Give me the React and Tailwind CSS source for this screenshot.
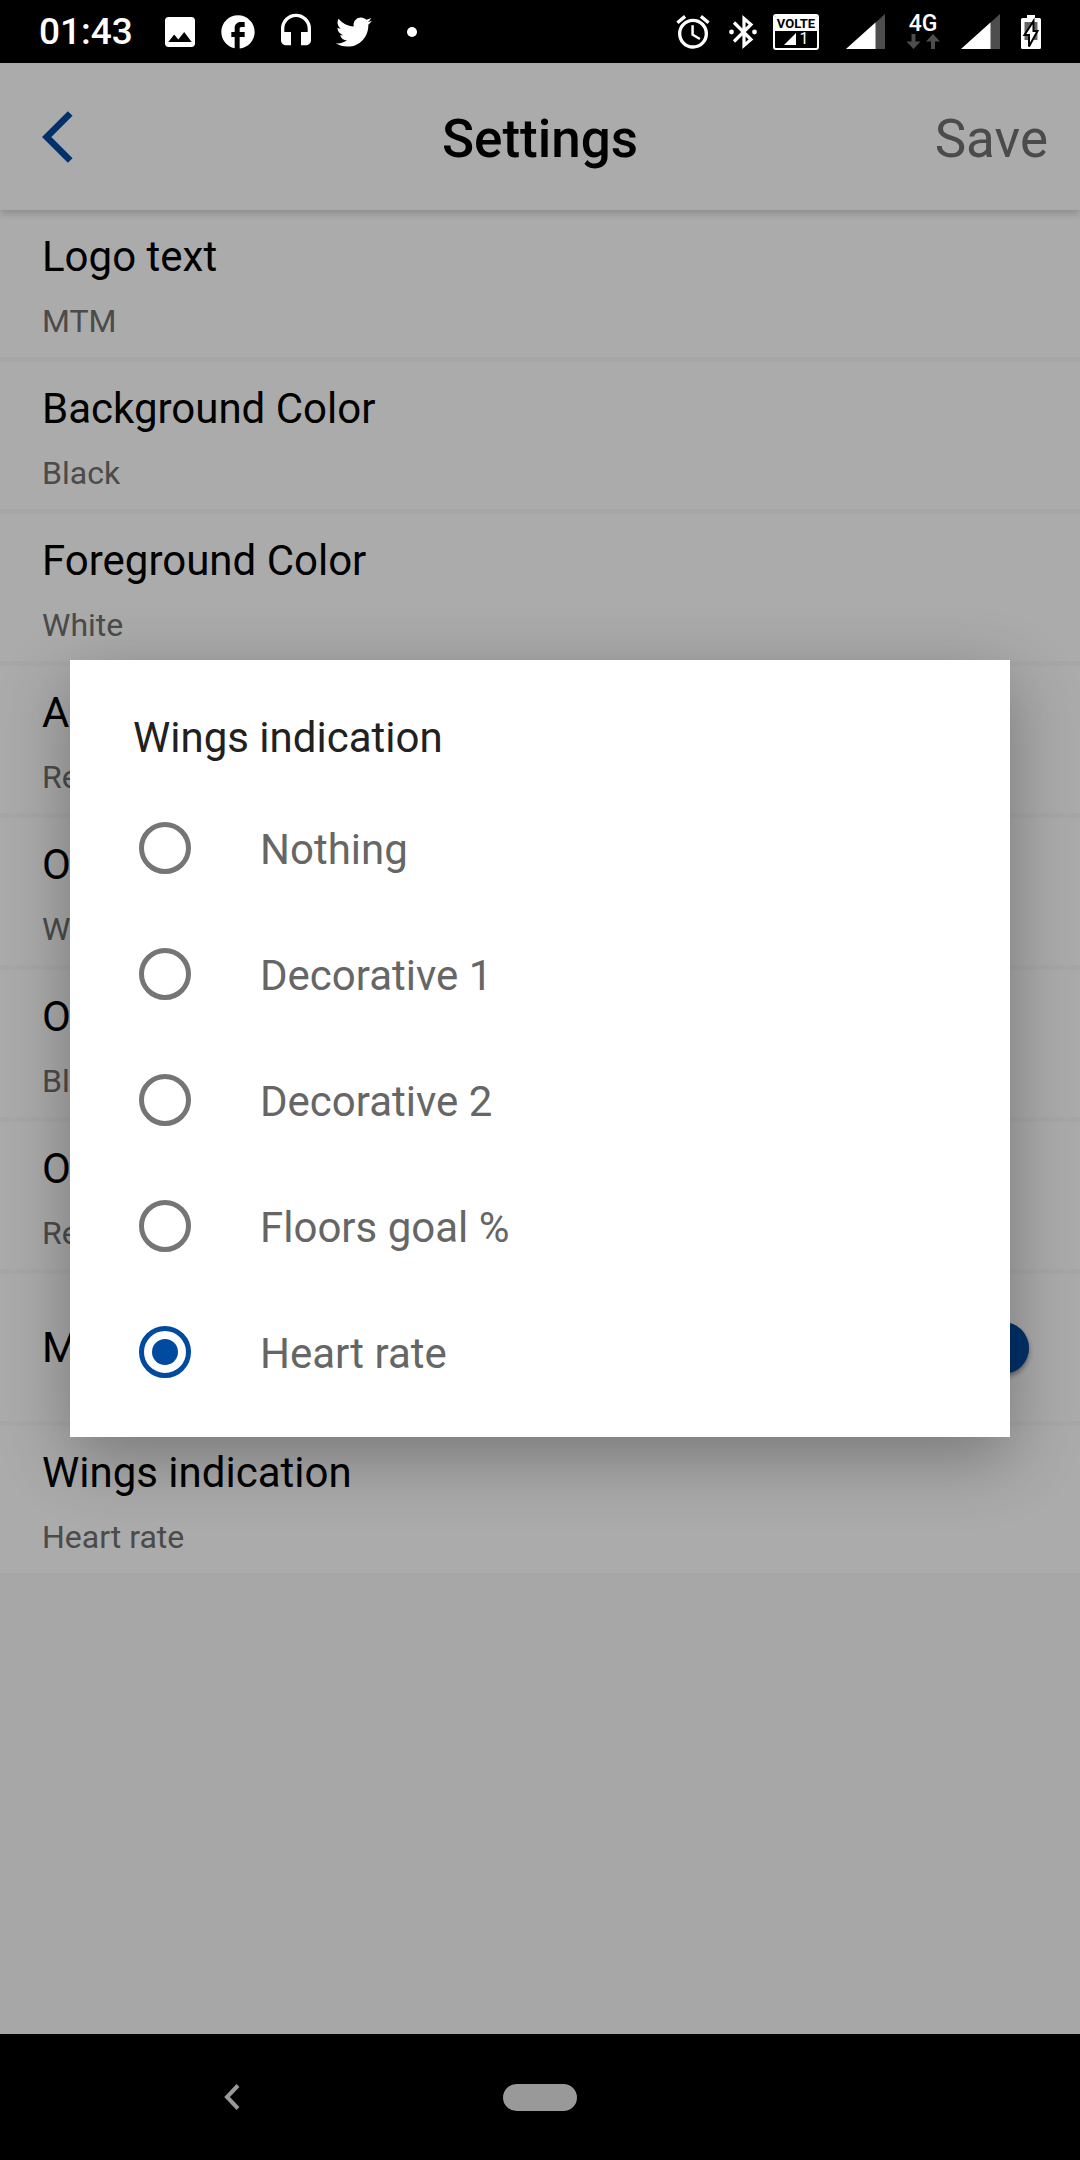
import { useState } from "react";
import { MdAlarm, MdFacebook, MdHeadset, MdImage } from "react-icons/md";
import { FaTwitter } from "react-icons/fa";

const SETTINGS = [
  { title: "Logo text", value: "MTM" },
  { title: "Background Color", value: "Black" },
  { title: "Foreground Color", value: "White" },
  { title: "Arc", value: "Red" },
  { title: "Ora", value: "White" },
  { title: "Orb", value: "Black" },
  { title: "Out", value: "Red" },
  { title: "Mo", toggle: true },
  { title: "Wings indication", value: "Heart rate" },
];

const OPTIONS = ["Nothing", "Decorative 1", "Decorative 2", "Floors goal %", "Heart rate"];

function BluetoothIcon() {
  return (
    <svg width="34" height="34" viewBox="0 0 34 34" fill="none" aria-hidden="true">
      <path d="M8 7.500 25 24.500 18 30.500V3.500L25 9.500 8 26.500" stroke="#fff" strokeWidth="3.200" />
      <circle cx="5.500" cy="17" r="2.400" fill="#fff" />
      <circle cx="28.500" cy="17" r="2.400" fill="#fff" />
    </svg>
  );
}

function VolteBadge() {
  return (
    <div className="mr-1.5 flex h-[36px] w-[46px] flex-col overflow-hidden rounded-[3px] border-2 border-white bg-black">
      <span className="flex h-[15px] items-center justify-center bg-white text-[13px] leading-[15px] font-bold text-black">
        VOLTE
      </span>
      <span className="flex flex-1 items-center justify-center gap-1 text-[16px] leading-[16px]">
        <svg width="12" height="12" viewBox="0 0 12 12" aria-hidden="true">
          <path d="M0 12 12 0V12Z" fill="#fff" />
        </svg>
        1
      </span>
    </div>
  );
}

function SignalIcon() {
  return (
    <svg width="39" height="35" viewBox="0 0 39 35" aria-hidden="true">
      <path d="M0 35 39 0V35Z" fill="#4d4d4d" />
      <path d="M0 35 29.500 8.500V35Z" fill="#fff" />
    </svg>
  );
}

function NetworkType() {
  return (
    <div className="flex w-[34px] flex-col items-center">
      <span className="text-[23px] leading-[20px] font-medium">4G</span>
      <svg width="34" height="15" viewBox="0 0 34 15" fill="#4d4d4d" aria-hidden="true">
        <path d="M5.500 0h4v7.500H14.500L7.500 15 .5 7.500H5.500Z" />
        <path d="M25 15h4V7.500H34L27 0 20 7.500H25Z" />
      </svg>
    </div>
  );
}

function BatteryIcon() {
  return (
    <svg width="20" height="34" viewBox="0 0 20 34" aria-hidden="true">
      <path d="M6 0h8v3h4.500Q20 3 20 4.500v28Q20 34 18.500 34h-17Q0 34 0 32.500v-28Q0 3 1.500 3H6Z" fill="#fff" />
      <path d="M3.500 7h13v18h-13Z" fill="#666" />
      <path d="M12.500 6 3.500 20H8v11.500l8.500-15.500H12.500Z" fill="#fff" stroke="#000" strokeWidth="2" />
    </svg>
  );
}

function StatusBar() {
  return (
    <div className="flex h-[63px] shrink-0 items-center bg-black pr-[39px] pl-[39px] text-white">
      <span className="w-[112px] text-[37px] leading-[44px] font-medium">01:43</span>
      <div className="grid grid-cols-[repeat(5,58px)] place-items-center">
        <MdImage size={40} />
        <MdFacebook size={40} />
        <MdHeadset size={40} />
        <FaTwitter size={36} />
        <span className="size-2.5 rounded-full bg-white" />
      </div>
      <div className="ml-auto flex items-center gap-[21px]">
        <div className="flex items-center gap-[13px]">
          <MdAlarm size={40} />
          <BluetoothIcon />
          <VolteBadge />
        </div>
        <SignalIcon />
        <NetworkType />
        <SignalIcon />
        <BatteryIcon />
      </div>
    </div>
  );
}

function Header() {
  return (
    <header className="relative grid h-[147px] grid-cols-[1fr_auto_1fr] items-center bg-white px-8 shadow-[0_3px_8px_rgba(0,0,0,0.2)]">
      <button type="button" aria-label="Back" className="justify-self-start pl-2.5">
        <svg width="31" height="52" viewBox="0 0 31 52" fill="none" aria-hidden="true">
          <path d="M28.200 2.500 4.700 26 28.200 49.500" stroke="#004a9f" strokeWidth="6.700" />
        </svg>
      </button>
      <h1 className="pt-1 text-[53px] leading-[64px] font-medium">Settings</h1>
      <button type="button" className="justify-self-end pt-1 text-[53px] leading-[64px] text-[#707070]">
        Save
      </button>
    </header>
  );
}

function SettingRow({ title, value, toggle }) {
  if (toggle) {
    return (
      <li className="border-b-5 border-[#f9f9f9] last:border-b-0">
        <label className="flex h-[147px] items-center justify-between bg-white pr-[51px] pl-[42px] text-[42px] leading-[54px]">
          {title}
          <input
            type="checkbox"
            role="switch"
            defaultChecked
            className="flex h-9 w-[92px] appearance-none items-center justify-end rounded-full bg-[#99b7d9] before:size-[52px] before:rounded-full before:bg-[#004a9f] before:shadow-[0_3px_5px_rgba(0,0,0,0.4)]"
          />
        </label>
      </li>
    );
  }
  return (
    <li className="border-b-5 border-[#f9f9f9] last:border-b-0">
      <button type="button" className="flex w-full flex-col items-start gap-4 bg-white px-[42px] pt-5 pb-[15px] text-left">
        <span className="text-[42px] leading-[54px]">{title}</span>
        <span className="text-[32px] leading-[42px] text-[#707070]">{value}</span>
      </button>
    </li>
  );
}

function ChoiceDialog({ value, onChange }) {
  return (
    <div
      role="dialog"
      aria-labelledby="dialog-title"
      className="w-full bg-white pb-[22px] shadow-[0_20px_64px_rgba(0,0,0,0.3)]"
    >
      <h2 id="dialog-title" className="px-[63px] pt-[51px] pb-5 text-[42px] leading-[54px] text-[#212121]">
        Wings indication
      </h2>
      {OPTIONS.map((option) => (
        <label key={option} className="flex h-[126px] items-center gap-[69px] px-[69px] text-[42px] leading-[54px] text-[#666666]">
          <input
            type="radio"
            name="wings"
            checked={value === option}
            onChange={() => onChange(option)}
            className="grid size-[52px] appearance-none place-content-center rounded-full border-5 border-[#757575] checked:border-[#004a9f] checked:before:size-[26px] checked:before:rounded-full checked:before:bg-[#004a9f]"
          />
          <span className="pt-1">{option}</span>
        </label>
      ))}
    </div>
  );
}

function NavigationBar() {
  return (
    <nav className="grid h-[126px] shrink-0 grid-cols-[1fr_auto_1fr] items-center bg-black">
      <button type="button" aria-label="Back" className="mr-10 justify-self-center">
        <svg width="16" height="26" viewBox="0 0 16 26" fill="none" aria-hidden="true">
          <path d="M14 1.500 3 13 14 24.500" stroke="#999" strokeWidth="4" />
        </svg>
      </button>
      <button type="button" aria-label="Home" className="h-[27px] w-[74px] rounded-full bg-[#999999]" />
    </nav>
  );
}

export default function App() {
  const [wings, setWings] = useState("Heart rate");
  return (
    <div className="flex min-h-screen flex-col font-['Roboto',sans-serif] text-black">
      <StatusBar />
      <main className="relative flex-1 overflow-hidden bg-[#f9f9f9]">
        <Header />
        <ul>
          {SETTINGS.map((setting) => (
            <SettingRow key={setting.title} {...setting} />
          ))}
        </ul>
        <div className="absolute inset-0 flex items-center bg-black/33 px-[70px]">
          <ChoiceDialog value={wings} onChange={setWings} />
        </div>
      </main>
      <NavigationBar />
    </div>
  );
}
